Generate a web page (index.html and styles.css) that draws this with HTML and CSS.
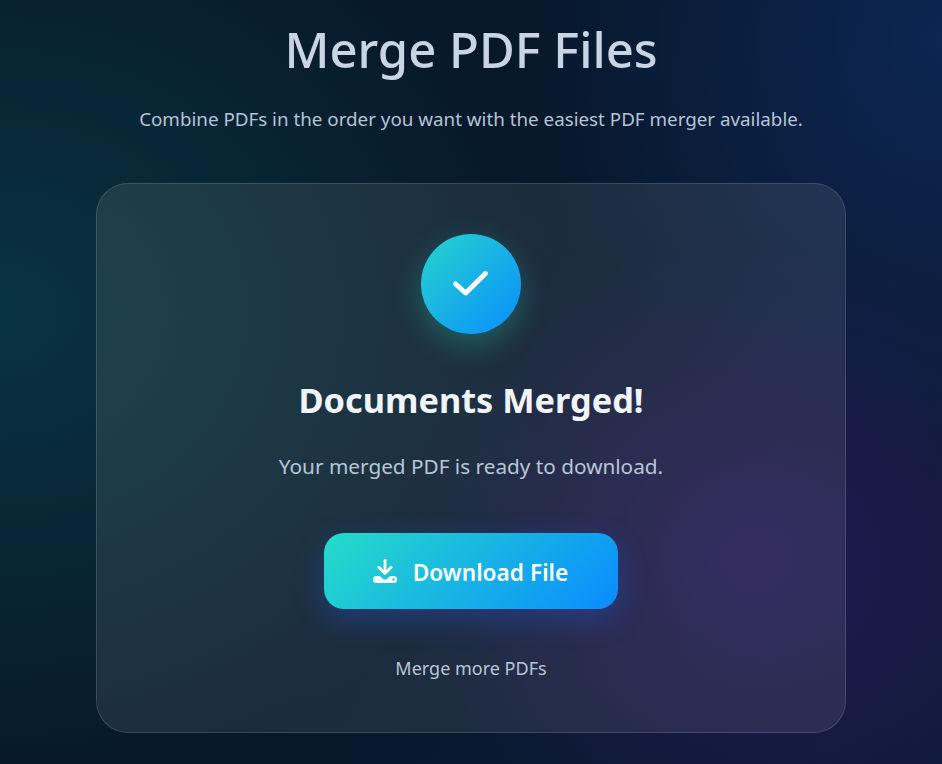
FILE: index.html
```html
<!DOCTYPE html>
<html lang="en">
<head>
<meta charset="utf-8">
<title>Merge PDF Files</title>
<link rel="stylesheet" href="styles.css">
</head>
<body>
<main class="page">
  <h1 class="title">Merge PDF Files</h1>
  <p class="subtitle">Combine PDFs in the order you want with the easiest PDF merger available.</p>
  <section class="card">
    <div class="check">
      <svg width="40" height="40" viewBox="0 0 40 40" fill="none"><path d="M4.500 20 L14.700 29 L34.500 9.500" stroke="#fff" stroke-width="5" stroke-linecap="round" stroke-linejoin="round"/></svg>
    </div>
    <h2 class="heading">Documents Merged!</h2>
    <p class="message">Your merged PDF is ready to download.</p>
    <a class="download" href="#">
      <svg class="download-icon" width="26" height="24" viewBox="0 0 26 24"><path fill="none" stroke="#fff" stroke-width="2.800" stroke-linecap="round" stroke-linejoin="round" d="M13 1.500V14M6.800 8.200 13 14.500l6.200-6.300"/><path fill="#fff" fill-rule="evenodd" d="M4.500 17h3.200l4 3.400h2.600l4-3.400h3.200a3.500 3.500 0 0 1 0 7h-17a3.500 3.500 0 0 1 0-7zM21.500 19.200a1.200 1.200 0 1 0 0 2.400 1.200 1.200 0 0 0 0-2.400z"/></svg>
      <span class="download-label">Download File</span>
    </a>
    <a class="again" href="#">Merge more PDFs</a>
  </section>
</main>
</body>
</html>
```

FILE: styles.css
```css
* { box-sizing: border-box; }
html, body { margin: 0; height: 100%; }
body {
  font-family: "Noto Sans", "Open Sans", sans-serif;
  overflow: hidden;
  background:
    radial-gradient(ellipse 560px 480px at 0% 41%, rgba(12, 85, 90, 0.45), rgba(12, 85, 90, 0) 100%),
    radial-gradient(ellipse 420px 430px at 100% 5%, rgba(15, 50, 115, 0.5), rgba(15, 50, 115, 0) 100%),
    radial-gradient(ellipse 340px 320px at 80% 73%, rgba(52, 26, 105, 0.6), rgba(52, 26, 105, 0) 100%),
    linear-gradient(115deg, #07182a 45%, #0d1b38 100%);
}
.page { display: flex; flex-direction: column; align-items: center; }
.title {
  margin: 16px 0 0;
  font-size: 49px;
  line-height: 66px;
  font-weight: 500;
  color: #c9d5e5;
}
.subtitle {
  margin: 25px 0 0;
  font-size: 18.800px;
  line-height: 24px;
  color: #b5c4d6;
}
.card {
  margin-top: 52px;
  width: 750px;
  height: 550px;
  padding-top: 50px;
  display: flex;
  flex-direction: column;
  align-items: center;
  border: 1px solid rgba(255, 255, 255, 0.13);
  border-radius: 32px;
  background: rgba(255, 255, 255, 0.085);
}
.check {
  width: 100px;
  height: 100px;
  border-radius: 50%;
  display: flex;
  align-items: center;
  justify-content: center;
  background: linear-gradient(135deg, #25d6cc, #0a8cff);
  box-shadow: 0 10px 30px rgba(45, 212, 191, 0.3);
}
.heading {
  margin: 42px 0 0;
  font-size: 34.300px;
  line-height: 48px;
  font-weight: 700;
  color: #f1f5fb;
}
.message {
  margin: 28px 0 0;
  font-size: 20.750px;
  line-height: 28px;
  color: #b9c6d8;
}
.download {
  margin-top: 53px;
  width: 293.400px;
  height: 76px;
  padding-right: 2px;
  display: flex;
  align-items: center;
  justify-content: center;
  gap: 15px;
  border-radius: 20px;
  background: linear-gradient(135deg, #25dcc8, #0a8cff);
  box-shadow: 0 10px 30px rgba(35, 100, 255, 0.3);
  color: #fff;
  font-size: 22.700px;
  font-weight: 600;
  text-decoration: none;
}
.download-label { padding-top: 2px; }
.again {
  margin-top: 46px;
  font-size: 18px;
  line-height: 26px;
  color: #b9c6d8;
  text-decoration: none;
}
```
